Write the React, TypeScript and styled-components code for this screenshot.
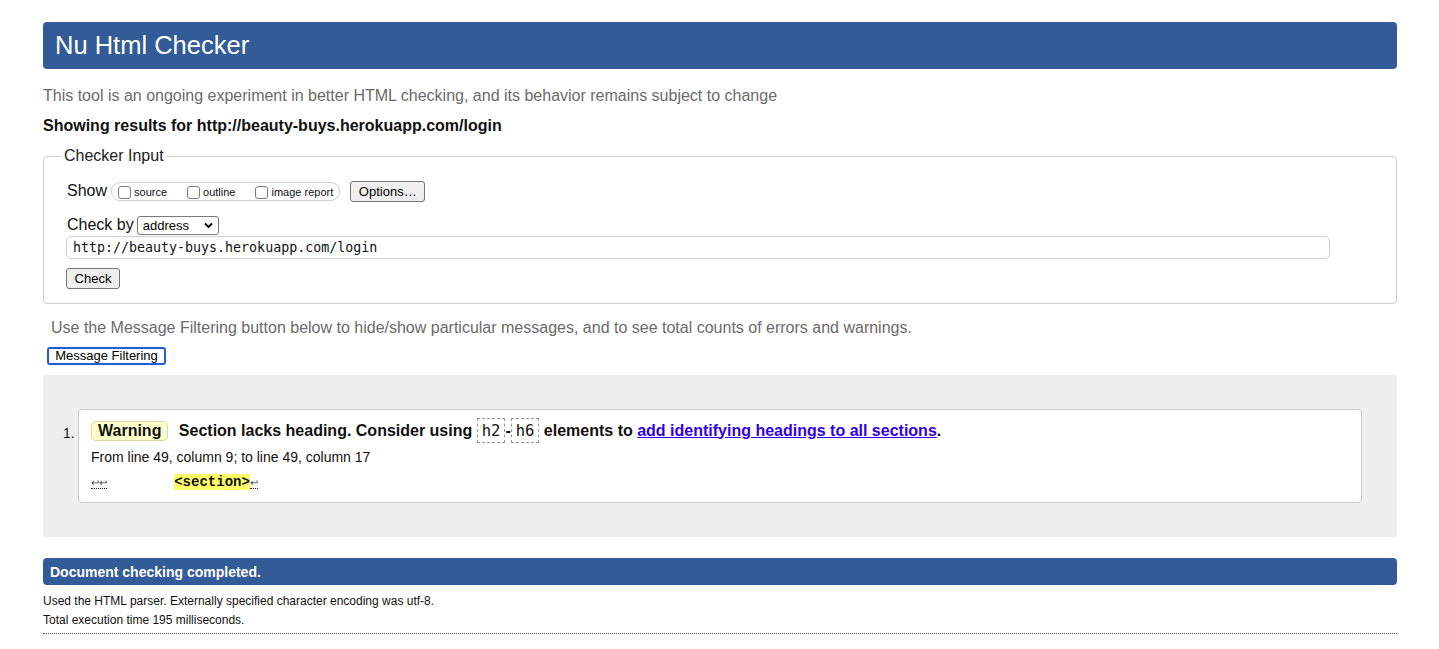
import styled, { createGlobalStyle } from 'styled-components';

const GlobalStyle = createGlobalStyle`
	body {
		margin: 0;
		padding: 22px 42px 0 43px;
		background: #fff;
		color: #000;
		font-family: 'Liberation Sans', Arial, Helvetica, sans-serif;
	}
`;

const Title = styled.h1`
	margin: 0;
	height: 47px;
	padding: 0 12px;
	display: flex;
	align-items: center;
	background: #335b97;
	color: #fff;
	font-size: 25.5px;
	font-weight: normal;
	border-radius: 4px;
`;

const Intro = styled.p`
	margin: 18px 0 0;
	font-size: 16px;
	line-height: 18px;
	color: #6b6b6b;
`;

const Showing = styled.p`
	margin: 12px 0 0;
	font-size: 16px;
	line-height: 18px;
	font-weight: bold;
	color: #111;
`;

const Fieldset = styled.fieldset`
	margin: 12px 0 0;
	padding: 15px 18px 14px;
	border: 1px solid #cfcfcf;
	border-radius: 4px;
	min-width: 0;
`;

const Legend = styled.legend`
	padding: 0 2px;
	font-size: 16px;
	line-height: 18px;
	color: #222;
`;

const Row = styled.div<{ $top: number; $h: number }>`
	display: flex;
	align-items: center;
	margin: ${(p) => p.$top}px 0 0 5px;
	height: ${(p) => p.$h}px;
	font-size: 16px;
	color: #111;
`;

const Pill = styled.span`
	display: inline-flex;
	align-items: center;
	height: 17px;
	margin-left: 4px;
	padding: 0 6px;
	border: 1px solid #cfcfcf;
	border-radius: 9px;
`;

const Box = styled.input`
	appearance: none;
	width: 13px;
	height: 13px;
	margin: 0 3px 0 0;
	border: 1px solid #7a7a7a;
	border-radius: 3px;
	background: #fff;
`;

const BoxLabel = styled.label<{ $gap: number }>`
	display: inline-flex;
	align-items: center;
	font-size: 11px;
	color: #111;
	margin-right: ${(p) => p.$gap}px;
	padding-top: 2px;
`;

const Btn = styled.button<{ $w: number; $h: number }>`
	box-sizing: border-box;
	width: ${(p) => p.$w}px;
	height: ${(p) => p.$h}px;
	padding: 0;
	font-family: 'Liberation Sans', Arial, sans-serif;
	font-size: 13px;
	color: #000;
	background: #efefef;
	border: 1px solid #767676;
	border-radius: 3px;
`;

const SelectWrap = styled.span`
	position: relative;
	display: inline-block;
	margin-left: 3px;
`;

const Select = styled.select`
	appearance: none;
	width: 82px;
	height: 19px;
	padding: 0 0 0 5px;
	font-family: 'Liberation Sans', Arial, sans-serif;
	font-size: 13px;
	color: #000;
	background: #fff;
	border: 1px solid #7a7a7a;
	border-radius: 3px;
`;

const Chevron = styled.svg`
	position: absolute;
	right: 6px;
	top: 6px;
	pointer-events: none;
`;

const UrlInput = styled.input`
	display: block;
	box-sizing: border-box;
	width: calc(100% - 52px);
	height: 23px;
	margin: 1px 0 0 4px;
	padding: 0 6px;
	border: 1px solid #cfcfcf;
	border-radius: 5px;
	font-family: 'DejaVu Sans Mono', monospace;
	font-size: 13.3px;
	color: #111;
`;

const CheckRow = styled.div`
	margin: 9px 0 0 4px;
	height: 21px;
`;

const Hint = styled.p`
	margin: 15px 0 0 8px;
	font-size: 16px;
	line-height: 18px;
	color: #6b6b6b;
`;

const FilterBtn = styled.button`
	display: block;
	box-sizing: border-box;
	margin: 10px 0 0 4px;
	width: 119px;
	height: 18px;
	padding: 0;
	font-family: 'Liberation Sans', Arial, sans-serif;
	font-size: 13px;
	line-height: 14px;
	color: #000;
	background: #fff;
	border: 2px solid #1e5fd6;
	border-radius: 3px;
`;

const Results = styled.div`
	margin-top: 10px;
	padding: 34px 35px 34px 20px;
	background: #eeeeee;
	border-radius: 4px;
	display: grid;
	grid-template-columns: 15px 1fr;
`;

const Marker = styled.span`
	font-size: 14px;
	line-height: 17px;
	padding-top: 16px;
	color: #111;
`;

const Message = styled.div`
	background: #fff;
	border: 1px solid #cccccc;
	border-radius: 4px;
	padding: 8px 12px 11px;
`;

const Headline = styled.p`
	margin: 0;
	height: 25px;
	display: flex;
	align-items: center;
	font-size: 16px;
	font-weight: bold;
	color: #111;
	white-space: pre;
`;

const Badge = styled.strong`
	display: inline-flex;
	align-items: center;
	height: 18px;
	padding: 0 6px;
	margin-right: 6px;
	background: #ffffc9;
	border: 1px solid #d8d8a8;
	border-radius: 5px;
	color: #111;
`;

const Code = styled.code`
	display: inline-flex;
	align-items: center;
	box-sizing: border-box;
	height: 25px;
	padding: 0 4px;
	border: 1px dashed #999;
	font-family: 'DejaVu Sans Mono', monospace;
	font-size: 15.5px;
	font-weight: normal;
	color: #111;
`;

const Link = styled.a`
	color: #3000ee;
	text-decoration: underline;
`;

const Location = styled.p`
	margin: 6px 0 0;
	font-size: 14px;
	line-height: 17px;
	color: #111;
`;

const Extract = styled.p`
	margin: 7px 0 0;
	height: 18px;
	font-family: 'Liberation Mono', monospace;
	font-size: 14px;
	line-height: 18px;
	white-space: pre;
	color: #111;
`;

const Lf = styled.span`
	font-family: 'Liberation Sans', sans-serif;
	font-size: 10px;
	border-bottom: 1px dotted #222;
	color: #444;
`;

const Hilite = styled.b`
	background: #ffff66;
	font-weight: bold;
`;

const Done = styled.h2`
	margin: 21px 0 0;
	height: 27px;
	padding: 0 7px;
	display: flex;
	align-items: center;
	background: #335b97;
	color: #fff;
	font-size: 14px;
	font-weight: bold;
	border-radius: 4px;
`;

const Stat = styled.p<{ $top: number }>`
	margin: ${(p) => p.$top}px 0 0;
	font-size: 12px;
	line-height: 15px;
	color: #111;
`;

const Rule = styled.hr`
	margin: 5px 0 0;
	border: 0;
	border-top: 1px dotted #555;
`;

const App = () => {
	return (
		<>
			<GlobalStyle />
			<Title>Nu Html Checker</Title>
			<Intro>This tool is an ongoing experiment in better HTML checking, and its behavior remains subject to change</Intro>
			<Showing>Showing results for http://beauty-buys.herokuapp.com/login</Showing>
			<Fieldset>
				<Legend>Checker Input</Legend>
				<Row $top={0} $h={22}>
					Show
					<Pill>
						<BoxLabel $gap={20}>
							<Box type='checkbox' />
							source
						</BoxLabel>
						<BoxLabel $gap={20}>
							<Box type='checkbox' />
							outline
						</BoxLabel>
						<BoxLabel $gap={0}>
							<Box type='checkbox' />
							image report
						</BoxLabel>
					</Pill>
					<Btn $w={75} $h={21} style={{ marginLeft: 10 }}>
						Options…
					</Btn>
				</Row>
				<Row $top={13} $h={20}>
					Check by
					<SelectWrap>
						<Select defaultValue='address'>
							<option value='address'>address</option>
						</Select>
						<Chevron width='9' height='7' viewBox='0 0 9 7'>
							<path d='M1 1.5 L4.5 5 L8 1.5' fill='none' stroke='#000' strokeWidth='1.8' />
						</Chevron>
					</SelectWrap>
				</Row>
				<UrlInput defaultValue='http://beauty-buys.herokuapp.com/login' />
				<CheckRow>
					<Btn $w={54} $h={21}>
						Check
					</Btn>
				</CheckRow>
			</Fieldset>
			<Hint>
				Use the Message Filtering button below to hide/show particular messages, and to see total counts of errors and
				warnings.
			</Hint>
			<FilterBtn>Message Filtering</FilterBtn>
			<Results>
				<Marker>1.</Marker>
				<Message>
					<Headline>
						<Badge>Warning</Badge> Section lacks heading. Consider using <Code>h2</Code>-<Code>h6</Code> elements to{' '}
						<Link href='#'>add identifying headings to all sections</Link>.
					</Headline>
					<Location>From line 49, column 9; to line 49, column 17</Location>
					<Extract>
						<Lf>↩↩</Lf>
						{'        '}
						<Hilite>&lt;section&gt;</Hilite>
						<Lf>↩</Lf>
					</Extract>
				</Message>
			</Results>
			<Done>Document checking completed.</Done>
			<Stat $top={9}>Used the HTML parser. Externally specified character encoding was utf-8.</Stat>
			<Stat $top={4}>Total execution time 195 milliseconds.</Stat>
			<Rule />
		</>
	);
};

export default App;
